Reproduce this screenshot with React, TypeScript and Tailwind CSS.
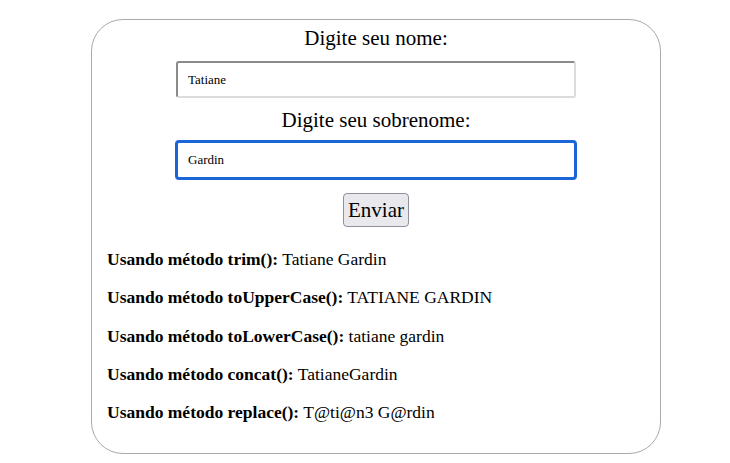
import { useState } from 'react';

const resultados = [
  { metodo: 'trim()', valor: 'Tatiane Gardin' },
  { metodo: 'toUpperCase()', valor: 'TATIANE GARDIN' },
  { metodo: 'toLowerCase()', valor: 'tatiane gardin' },
  { metodo: 'concat()', valor: 'TatianeGardin' },
  { metodo: 'replace()', valor: 'T@ti@n3 G@rdin' },
];

export default function App() {
  const [nome, setNome] = useState('Tatiane');
  const [sobrenome, setSobrenome] = useState('Gardin');

  return (
    <div className="w-[730px] h-[463px] bg-white font-['Liberation_Serif',serif] text-black">
      <div className="ml-[91px] mt-[19px] w-[570px] h-[435px] rounded-[32px] border border-[#aaaaaa] pt-[6px] px-[15px]">
        <div className="flex flex-col items-center">
          <label className="text-[21px] leading-[24px]">Digite seu nome:</label>
          <input
            value={nome}
            onChange={(e) => setNome(e.target.value)}
            className="mt-[11px] w-[400px] h-[37px] px-[10px] text-[13px] rounded-[3px] border-2 border-t-[#8a8a8a] border-l-[#8a8a8a] border-b-[#dcdcdc] border-r-[#dcdcdc] outline-none"
          />
          <label className="mt-[10px] text-[21px] leading-[24px]">Digite seu sobrenome:</label>
          <input
            value={sobrenome}
            onChange={(e) => setSobrenome(e.target.value)}
            className="mt-[8px] w-[402px] h-[40px] px-[10px] text-[13px] rounded-[4px] border-[3px] border-[#1a66d9] outline-none"
          />
          <button className="mt-[13px] h-[34px] px-[4px] text-[21px] leading-[24px] bg-[#e9e9ed] border border-[#8f8f9d] rounded-[4px]">
            Enviar
          </button>
        </div>
        <div className="mt-[22px] flex flex-col gap-[18.3px] text-[17.5px] leading-[20px]">
          {resultados.map((r) => (
            <p key={r.metodo}>
              <b>Usando método {r.metodo}:</b> {r.valor}
            </p>
          ))}
        </div>
      </div>
    </div>
  );
}
